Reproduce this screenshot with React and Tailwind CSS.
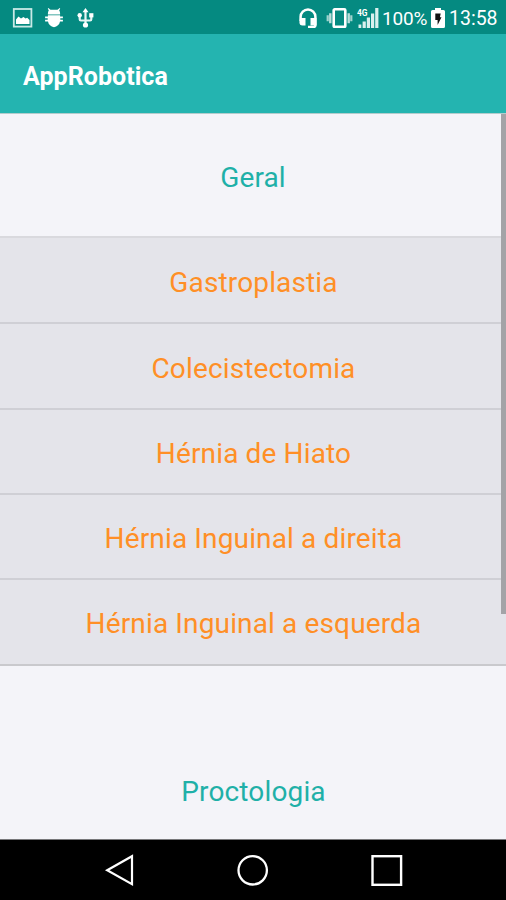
import React from 'react';

const PROCEDURES = [
  { title: 'Gastroplastia', row: 'h-[86px] pt-1.5 border-b-2' },
  { title: 'Colecistectomia', row: 'h-[86px] pt-1.5 border-b-2' },
  { title: 'Hérnia de Hiato', row: 'h-[85px] pt-1 border-b-2' },
  { title: 'Hérnia Inguinal a direita', row: 'h-[85px] pt-[5px] border-b-2' },
  { title: 'Hérnia Inguinal a esquerda', row: 'h-[84px] pt-1' },
];

const StatusBar = () => {
  return (
    <div className="flex h-[34px] shrink-0 items-center justify-between bg-[#058a81] pt-0.5 pl-3 pr-2 text-white">
      <div className="flex items-center">
        {/* Picture */}
        <svg width="21" height="20" viewBox="0 0 21 20" fill="none">
          <rect x="1.8" y="1" width="17.6" height="17.6" stroke="#c9e9e6" strokeWidth="1.8" />
          <path d="M4 16v-4.500l2.500-3 2.500 2 2.500-1.500 2 1.500 1.700-.8 2.300 2.300v4z" fill="#fff" />
        </svg>
        {/* Debug mascot */}
        <svg className="ml-3" width="18" height="20" viewBox="0 0 18 20" fill="#fff">
          <path d="M3.300 0l2.200 1.800h7L14.700 0l.5.6-1 2c.6.8.9 1.700.9 2.800v1.200H2.900V5.400c0-1.100.3-2 .9-2.800l-1-2z" />
          <path d="M2.900 7.200h12.200v1.300h2.800v1.700h-2.600v1.600h2.600v1.700h-2.900c-.5 3.100-2.900 5.300-6 5.800-3.100-.5-5.500-2.700-6-5.800H.1v-1.700h2.600v-1.600H.1V8.500h2.800z" />
        </svg>
        {/* USB */}
        <svg className="ml-3.5" width="17" height="20" viewBox="0 0 17 20" fill="none">
          <path d="M8.500 3v14M2.700 7v4.300q0 1.200 1.200 1.200h9.200q1.200 0 1.200-1.200V7" stroke="#e6f6f4" strokeWidth="2.200" />
          <path d="M8.500 0l3 4.200h-6z" fill="#fff" />
          <circle cx="2.700" cy="7.200" r="2.200" fill="#fff" />
          <rect x="12.200" y="5.200" width="4.200" height="4.200" fill="#fff" />
          <circle cx="8.500" cy="17" r="2.600" fill="#fff" />
        </svg>
      </div>

      <div className="flex items-center">
        {/* Headset */}
        <svg width="18" height="20" viewBox="0 0 18 20" fill="none">
          <path d="M1.600 13V8.800a7.400 7.400 0 0 1 14.800 0V17q0 2-2 2H9" stroke="#fff" strokeWidth="2.500" />
          <path d="M1 10h5.500v7.500H3.500Q.4 17.500.4 14zM11.500 10h6v7.500h-6z" fill="#fff" />
        </svg>
        {/* Vibrate */}
        <svg className="ml-[9px]" width="27" height="20" viewBox="0 0 27 20" fill="none">
          <rect x="7.700" y="1.300" width="11.600" height="17.600" rx="1" stroke="#fff" strokeWidth="2.600" />
          <path d="M4.300 5.200v10M22.700 5.200v10" stroke="#b9dfdb" strokeWidth="2.400" />
          <path d="M1.700 7.200v6M25.300 7.200v6" stroke="#a0d2ce" strokeWidth="2.200" />
        </svg>
        {/* Signal */}
        <svg className="ml-1" width="22" height="20" viewBox="0 0 22 20">
          <g fill="#d9f0ee">
            <rect x="1.500" y="16.500" width="2.800" height="3.500" />
            <rect x="5.600" y="13.500" width="3.200" height="6.500" />
            <rect x="9.800" y="9.500" width="3.200" height="10.500" />
            <rect x="14" y="5.500" width="3.200" height="14.500" />
            <rect x="18.200" y="0" width="3.200" height="20" />
          </g>
          <text x="0" y="7.500" fontSize="8.500" fontWeight="700" fontFamily="Roboto, sans-serif" fill="#fff" textLength="10.500" lengthAdjust="spacingAndGlyphs">4G</text>
        </svg>
        <span className="ml-[3px] w-[47px] pt-0.5 whitespace-nowrap text-[19px] leading-5 tracking-[-0.2px]">100%</span>
        {/* Battery */}
        <svg className="ml-0.5" width="14" height="20" viewBox="0 0 14 20">
          <path d="M4 0h6v2h2.500Q14 2 14 3.500v15q0 1.500-1.500 1.500h-11Q0 20 0 18.500v-15Q0 2 1.500 2H4z" fill="#fff" />
          <path d="M4.300 5.500h5.400L8.900 9.300h1.600L6.600 17v-5H4.300z" fill="#111" />
        </svg>
        <span className="ml-1 w-[49px] pt-0.5 whitespace-nowrap text-[19.500px] leading-5">13:58</span>
      </div>
    </div>
  );
};

const NavigationBar = () => {
  return (
    <div className="flex h-[61px] shrink-0 items-center justify-between border-t border-[#77777a] bg-black px-[102px]">
      <svg width="34" height="34" viewBox="0 0 34 34" fill="none" stroke="#fff" strokeWidth="2.200">
        <path d="M5.200 17.200L30 3.200v28z" />
      </svg>
      <svg width="34" height="34" viewBox="0 0 34 34" fill="none" stroke="#fff" strokeWidth="2.300">
        <circle cx="16.700" cy="17.300" r="14.200" />
      </svg>
      <svg width="34" height="34" viewBox="0 0 34 34" fill="none" stroke="#fff" strokeWidth="2.400">
        <rect x="2.500" y="3.200" width="28.600" height="28.600" />
      </svg>
    </div>
  );
};

const App = () => {
  return (
    <div className="flex h-[900px] w-[506px] flex-col overflow-hidden bg-[#f4f4f9] font-[Roboto,sans-serif]">
      <StatusBar />

      <header className="flex h-[79px] shrink-0 items-center bg-[#24b4b0] pl-[23px] pt-1.5">
        <h1 className="text-[25px] leading-8 font-bold tracking-[0.05px] text-white">AppRobotica</h1>
      </header>

      <main className="relative flex-1 border-t border-[#b3cccd] text-center text-[28px] tracking-[0.14px] text-[#ff8f26]">
        <h2 className="flex h-[122px] items-center justify-center pt-[5px] text-[#1fb0a8]">Geral</h2>

        <ul className="border-y-2 border-t-[#d9d9de] border-b-[#c9c9cd] bg-[#e4e4ea]">
          {PROCEDURES.map((item) => (
            <li
              key={item.title}
              className={`flex items-center justify-center border-[#cfcfd5] pl-px ${item.row}`}
            >
              {item.title}
            </li>
          ))}
        </ul>

        <h2 className="flex h-[173px] items-end justify-center pb-[26px] pl-px text-[#1fb0a8]">Proctologia</h2>

        {/* Scroll indicator */}
        <div className="absolute top-0 right-0 h-[500px] w-[5px] bg-[#a3a3a7]" />
      </main>

      <NavigationBar />
    </div>
  );
};

export default App;
